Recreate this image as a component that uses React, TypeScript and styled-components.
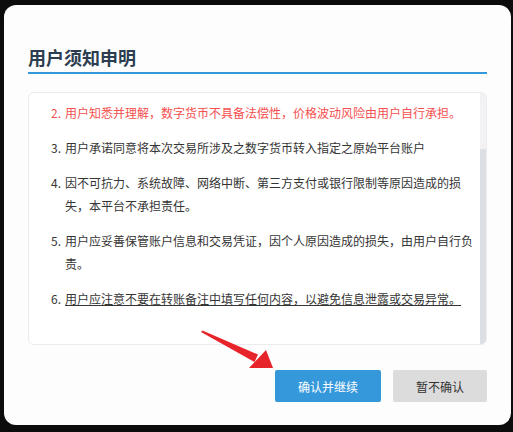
import React, { useLayoutEffect, useRef, useState } from "react";
import styled, { createGlobalStyle } from "styled-components";

const GlobalStyle = createGlobalStyle`
  html,
  body {
    margin: 0;
    padding: 0;
    background: #0c0c0c;
  }
  body {
    font-family: "Noto Sans CJK SC", "Noto Sans", sans-serif;
  }
`;

const Page = styled.div`
  position: relative;
  width: 513px;
  height: 432px;
  padding: 5px 2px 7px 4px;
  box-sizing: border-box;
  background: #0c0c0c;
`;

const Modal = styled.div`
  width: 507px;
  height: 420px;
  box-sizing: border-box;
  padding: 39px 24px 23px;
  background: #fdfdfd;
  border-radius: 12px;
  display: flex;
  flex-direction: column;
`;

const Title = styled.h2`
  margin: 0;
  padding-bottom: 2px;
  font-size: 18px;
  line-height: 26px;
  font-weight: 700;
  color: #2c3e50;
  border-bottom: 2px solid #3498db;
`;

const NoticeBox = styled.div`
  margin-top: 18px;
  height: 253px;
  box-sizing: border-box;
  border: 1px solid #ececec;
  border-radius: 6px;
  background: #fff;
  display: flex;
  overflow: hidden;
`;

const Viewport = styled.div`
  flex: 1;
  overflow: hidden;
  padding: 22px 4px 22px 22px;
`;

const Track = styled.div`
  flex: 0 0 6px;
  background: #f2f2f4;
  display: flex;
  flex-direction: column;
`;

const Thumb = styled.div`
  background: #dcdfe4;
  border-radius: 1px;
`;

const List = styled.ol`
  margin: 0;
  padding: 0;
  list-style: none;
`;

const Item = styled.li<{ $warn?: boolean }>`
  display: flex;
  margin-bottom: 12px;
  font-size: 12px;
  line-height: 23px;
  color: ${({ $warn }) => ($warn ? "#f5504f" : "#353535")};
`;

const Num = styled.span`
  flex: 0 0 14px;
`;

const Text = styled.span<{ $underline?: boolean }>`
  flex: 1;
  text-decoration: ${({ $underline }) => ($underline ? "underline" : "none")};
`;

const Footer = styled.div`
  margin-top: 25px;
  display: flex;
  justify-content: flex-end;
  gap: 12px;
`;

const Button = styled.button<{ $primary?: boolean }>`
  height: 32px;
  padding: 0 23px;
  border: none;
  border-radius: 2px;
  font-family: inherit;
  font-size: 12px;
  cursor: pointer;
  background: ${({ $primary }) => ($primary ? "#3498db" : "#dcdcdc")};
  color: ${({ $primary }) => ($primary ? "#ffffff" : "#333333")};
`;

const Pointer = styled.svg`
  position: absolute;
  left: 0;
  top: 0;
  pointer-events: none;
`;

const notices = [
  {
    text: "本平台仅为用户提供数字货币兑换及转账服务，用户应确保所提供的身份信息及账户信息真实、准确、完整。",
  },
  {
    text: "用户知悉并理解，数字货币不具备法偿性，价格波动风险由用户自行承担。",
    warn: true,
  },
  { text: "用户承诺同意将本次交易所涉及之数字货币转入指定之原始平台账户" },
  {
    text: "因不可抗力、系统故障、网络中断、第三方支付或银行限制等原因造成的损失，本平台不承担责任。",
  },
  {
    text: "用户应妥善保管账户信息和交易凭证，因个人原因造成的损失，由用户自行负责。",
  },
  {
    text: "用户应注意不要在转账备注中填写任何内容，以避免信息泄露或交易异常。",
    underline: true,
  },
];

const App = (): JSX.Element => {
  const viewRef = useRef<HTMLDivElement>(null);
  const [thumb, setThumb] = useState({ top: 0, size: 0 });

  useLayoutEffect(() => {
    const el = viewRef.current;
    if (!el) return;
    el.scrollTop = el.scrollHeight;
    const track = el.clientHeight;
    setThumb({
      top: (el.scrollTop / el.scrollHeight) * track,
      size: (el.clientHeight / el.scrollHeight) * track,
    });
  }, []);

  return (
    <>
      <GlobalStyle />
      <Page>
        <Modal>
          <Title>用户须知申明</Title>
          <NoticeBox>
            <Viewport ref={viewRef}>
              <List>
                {notices.map((n, i) => (
                  <Item key={i} $warn={n.warn}>
                    <Num>{i + 1}.</Num>
                    <Text $underline={n.underline}>{n.text}</Text>
                  </Item>
                ))}
              </List>
            </Viewport>
            <Track>
              <Thumb
                style={{ marginTop: `${thumb.top}px`, height: `${thumb.size}px` }}
              />
            </Track>
          </NoticeBox>
          <Footer>
            <Button $primary>确认并继续</Button>
            <Button>暂不确认</Button>
          </Footer>
        </Modal>
        <Pointer width="513" height="432" viewBox="0 0 513 432">
          <polygon
            points="201,332 202.5,330.5 258,354.5 254.5,362"
            fill="#e8242b"
          />
          <polygon points="273,368 266,350 249,368" fill="#e8242b" />
        </Pointer>
      </Page>
    </>
  );
};

export default App;
